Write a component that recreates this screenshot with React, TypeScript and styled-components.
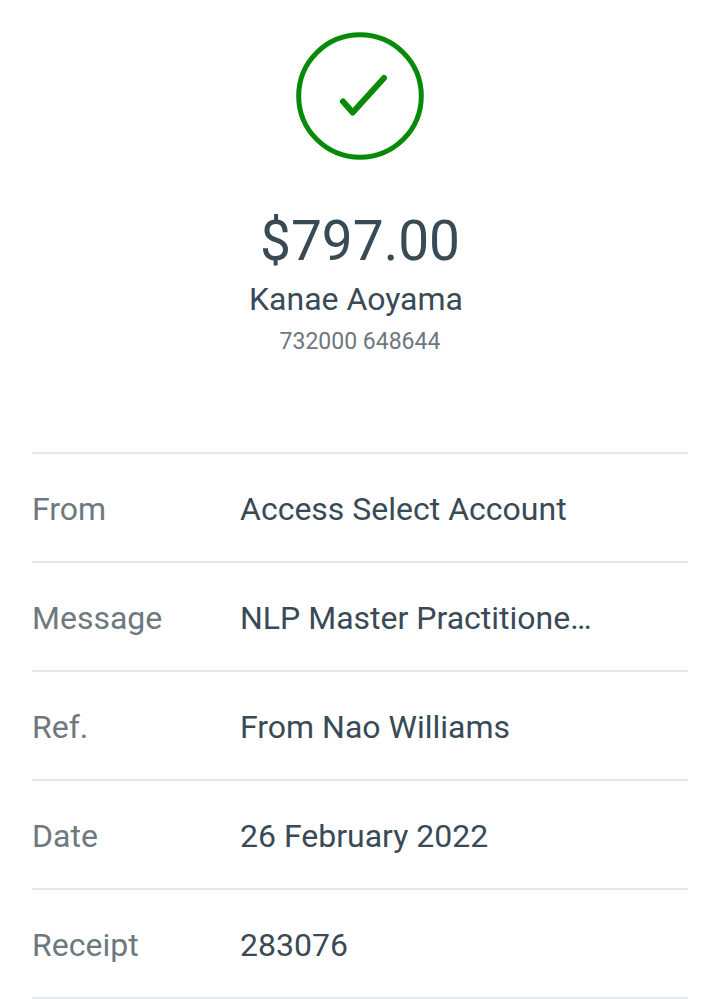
import React from "react";
import styled, { createGlobalStyle } from "styled-components";

const GlobalStyle = createGlobalStyle`
  *, *::before, *::after { box-sizing: border-box; }
  body {
    margin: 0;
    background: #fff;
    color: #394a57;
    font-family: Roboto, "Liberation Sans", sans-serif;
  }
`;

const Page = styled.main`
  padding: 32px 32px 0;
`;

const Summary = styled.header`
  display: flex;
  flex-direction: column;
  align-items: center;
  padding-bottom: 92px;
  text-align: center;
`;

const SuccessIcon = styled.svg`
  display: block;
  width: 128px;
  height: 128px;
  margin-bottom: 48px;
`;

const Amount = styled.h1`
  margin: 0;
  font-size: 55px;
  font-weight: 400;
  line-height: 66px;
`;

const Payee = styled.p`
  margin: 0;
  padding-right: 8px;
  font-size: 32px;
  line-height: 50px;
`;

const AccountNumber = styled.p`
  margin: 0;
  color: #6e787f;
  font-size: 23px;
  line-height: 36px;
`;

const Details = styled.dl`
  margin: 0;
  border-top: 2px solid #e6e7e8;
`;

const DetailRow = styled.div`
  display: grid;
  grid-template-columns: 208px minmax(0, 1fr);
  padding: 34px 0 30px;
  border-bottom: 2px solid #e6e7e8;
  font-size: 32px;
  line-height: 43px;
`;

const Label = styled.dt`
  color: #6e787f;
`;

const Value = styled.dd`
  margin: 0;
  overflow: hidden;
  text-overflow: ellipsis;
  white-space: nowrap;
`;

const details = [
  { label: "From", value: "Access Select Account" },
  { label: "Message", value: "NLP Master Practitione…" },
  { label: "Ref.", value: "From Nao Williams" },
  { label: "Date", value: "26 February 2022" },
  { label: "Receipt", value: "283076" },
];

export default function App() {
  return (
    <>
      <GlobalStyle />
      <Page>
        <Summary>
          <SuccessIcon viewBox="0 0 128 128" role="img" aria-label="Payment successful">
            <circle cx="64" cy="64" r="61.3" fill="none" stroke="#078a07" strokeWidth="5" />
            <path
              d="M47 69.5 56.7 80.5 88 46"
              fill="none"
              stroke="#078a07"
              strokeWidth="6"
              strokeLinecap="round"
              strokeLinejoin="round"
            />
          </SuccessIcon>
          <Amount>$797.00</Amount>
          <Payee>Kanae Aoyama</Payee>
          <AccountNumber>732000 648644</AccountNumber>
        </Summary>
        <Details>
          {details.map(({ label, value }) => (
            <DetailRow key={label}>
              <Label>{label}</Label>
              <Value>{value}</Value>
            </DetailRow>
          ))}
        </Details>
      </Page>
    </>
  );
}
